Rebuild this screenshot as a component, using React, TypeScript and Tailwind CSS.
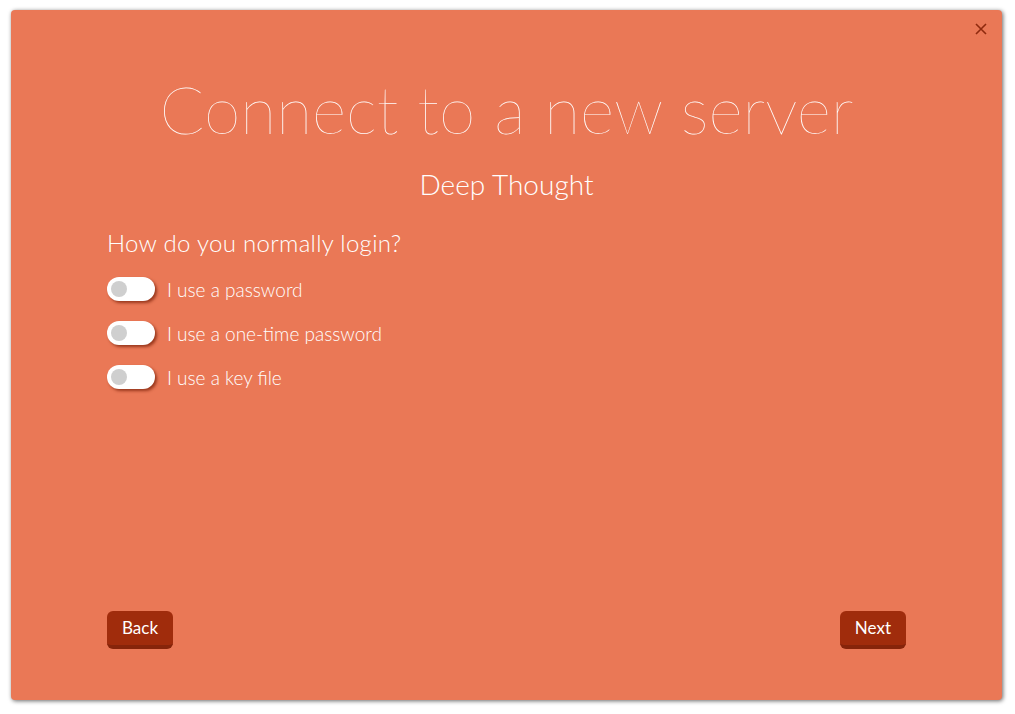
import { useState } from 'react';

const options = ['I use a password', 'I use a one-time password', 'I use a key file'];

function Toggle({ on, onClick }: { on: boolean; onClick: () => void }) {
  return (
    <button
      onClick={onClick}
      className="relative w-[48px] h-[24px] rounded-full bg-white shadow-[2px_2px_3px_rgba(120,30,5,0.7)] shrink-0"
    >
      <span
        className={`absolute top-[4px] w-[16px] h-[16px] rounded-full ${on ? 'left-[28px] bg-[#a02c0c]' : 'left-[4px] bg-[#cfcfcf]'}`}
      />
    </button>
  );
}

export default function App() {
  const [checked, setChecked] = useState([false, false, false]);

  return (
    <div className="w-[1015px] h-[714px] bg-white pt-[10px] pl-[11px]">
      <div
        className="relative w-[991px] h-[690px] rounded-[4px] bg-[#ea7856] shadow-[1px_1px_4px_rgba(0,0,0,0.6)] flex flex-col px-[96px] text-white"
        style={{ fontFamily: 'Lato, "Open Sans", sans-serif' }}
      >
        {/* close */}
        <button className="absolute top-[12px] right-[14px] block leading-none text-[#8f2a0e]">
          <svg className="block" width="14" height="14" viewBox="0 0 14 14" stroke="currentColor" strokeWidth="1.6">
            <path d="M2 2 L12 12 M12 2 L2 12" />
          </svg>
        </button>

        {/* Header */}
        <h1 className="text-center font-thin text-[66px] leading-none mt-[66px]">
          Connect to a new server
        </h1>
        <p className="text-center font-light text-[28px] leading-none mt-[28px]">Deep Thought</p>

        {/* Options */}
        <h2 className="font-light text-[24px] leading-none mt-[33px] tracking-[0.3px]">How do you normally login?</h2>
        <div className="flex flex-col gap-[20px] mt-[22px]">
          {options.map((label, i) => (
            <label key={i} className="flex items-center gap-[12px] cursor-pointer">
              <Toggle
                on={checked[i]}
                onClick={() => setChecked(checked.map((c, j) => (j === i ? !c : c)))}
              />
              <span className="font-light text-[19px] leading-none">{label}</span>
            </label>
          ))}
        </div>

        {/* Footer */}
        <div className="mt-auto mb-[51px] flex justify-between">
          <button className="h-[38px] px-[15px] rounded-[6px] bg-[#a02c0c] border-b-[4px] border-[#86240a] text-[17px] font-normal">
            Back
          </button>
          <button className="h-[38px] px-[15px] rounded-[6px] bg-[#a02c0c] border-b-[4px] border-[#86240a] text-[17px] font-normal">
            Next
          </button>
        </div>
      </div>
    </div>
  );
}
